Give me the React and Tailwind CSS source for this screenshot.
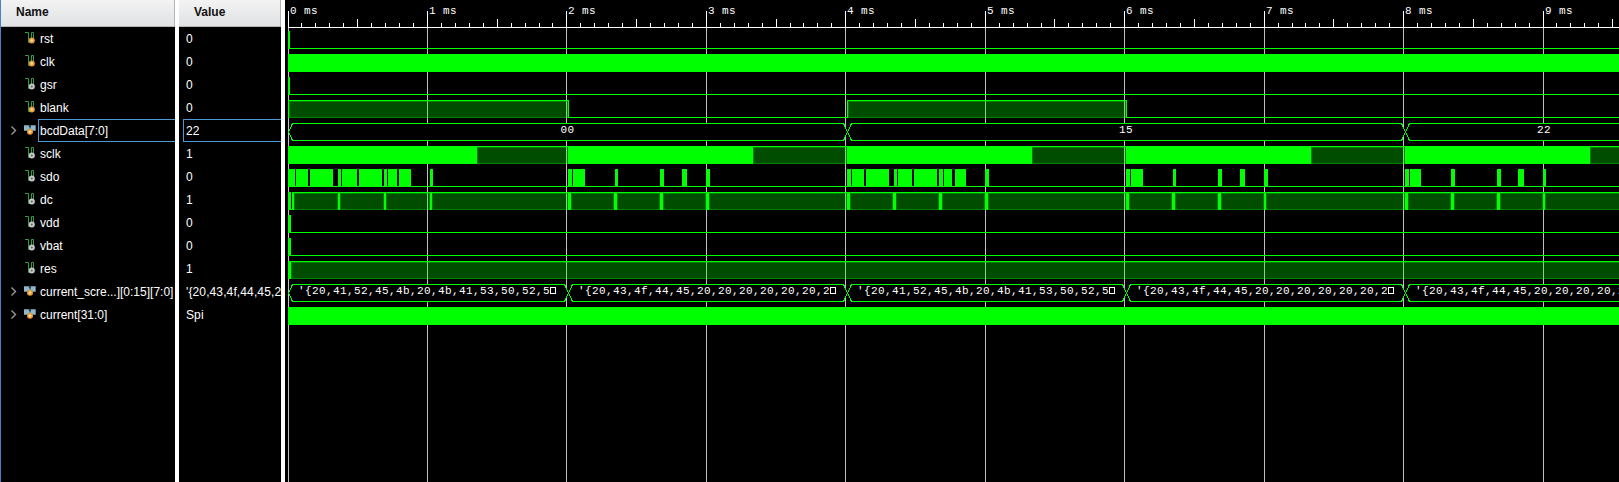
import React from 'react';

const LEFT = 288;
const RIGHT = 1619;
const MS = 139.45;

const signals = [
  { name: 'rst', value: '0', icon: 'in' },
  { name: 'clk', value: '0', icon: 'in' },
  { name: 'gsr', value: '0', icon: 'sig' },
  { name: 'blank', value: '0', icon: 'in' },
  { name: 'bcdData[7:0]', value: '22', icon: 'bus', selected: true },
  { name: 'sclk', value: '1', icon: 'sig' },
  { name: 'sdo', value: '0', icon: 'sig' },
  { name: 'dc', value: '1', icon: 'sig' },
  { name: 'vdd', value: '0', icon: 'sig' },
  { name: 'vbat', value: '0', icon: 'sig' },
  { name: 'res', value: '1', icon: 'sig' },
  { name: 'current_scre...][0:15][7:0]', value: "'{20,43,4f,44,45,20", icon: 'bus' },
  { name: 'current[31:0]', value: 'Spi', icon: 'bus' },
];

function SignalIcon({ type }) {
  if (type === 'bus') {
    return (
      <svg width="14" height="13" viewBox="0 0 14 13" className="block shrink-0">
        <path d="M1 1.300h4.800L7 2.600 8 1.300h4.700v5.500H10.200L7 4.500 3.800 6.800H1z" fill="#8fb8cc" />
        <path d="M5.300 1.300h2.700v2l-1.200 1z" fill="#27424f" />
        <circle cx="7" cy="7.700" r="3" fill="#ee9a35" />
        <path d="M7 6 8.500 7.700 7 9.400 5.500 7.700z" fill="#ffe2b4" />
      </svg>
    );
  }
  const input = type === 'in';
  return (
    <svg width="14" height="13" viewBox="0 0 14 13" className="block shrink-0">
      <path d="M2 0.500h3.500v10h3V0.500h2V7" fill="none" stroke="#2f9a48" strokeWidth="1" />
      <circle cx="8.800" cy="8.500" r="3" fill={input ? '#ee9a35' : '#c8c8c8'} />
      {input ? (
        <path d="M8.800 6.900 10.300 8.500 8.800 10.100 7.300 8.500z" fill="#ffe2b4" />
      ) : (
        <circle cx="8.800" cy="8.500" r="1" fill="#606060" />
      )}
    </svg>
  );
}

function Box({ x1, x2, y, fill = '#00ff00' }) {
  return <rect x={x1} y={y} width={x2 - x1} height="18" fill={fill} />;
}

function HLine({ x1 = LEFT, x2 = RIGHT, y }) {
  return <rect x={x1} y={y} width={x2 - x1} height="1" fill="#00ff00" />;
}

function High({ x1, x2, y }) {
  return (
    <g>
      <rect x={x1} y={y + 1} width={x2 - x1} height="17" fill="#00ff00" fillOpacity="0.3" />
      <rect x={x1 + 0.5} y={y + 1.5} width={x2 - x1 - 1} height="16" fill="none" stroke="#00ff00" strokeOpacity="0.3" />
      <HLine x1={x1} x2={x2} y={y} />
    </g>
  );
}

function Bus({ edges, y }) {
  return edges.slice(0, -1).map((a, i) => {
    const b = edges[i + 1];
    const l = a + 0.5;
    const r = b + 0.5;
    return (
      <path
        key={a}
        d={`M${l} ${y + 9}L${l + 4} ${y + 0.5}H${r - 4}L${r} ${y + 9}L${r - 4} ${y + 17.5}H${l + 4}Z`}
        fill="#000"
        stroke="#00ff00"
        strokeWidth="1"
      />
    );
  });
}

function Label({ x, y, children }) {
  return (
    <text
      x={x}
      y={y}
      fill="#fff"
      fontSize="11"
      letterSpacing="0.4"
      fontFamily='"Liberation Mono", monospace'
      xmlSpace="preserve"
    >
      {children}
    </text>
  );
}

const rowTop = (i) => 31 + 23 * i;

const sdo = [
  [288, 295], [296, 308], [310, 333], [338, 341], [342, 357], [359, 382], [384, 387], [388, 397], [399, 411], [430, 433],
  [568, 572], [573, 585], [615, 618], [660, 664], [682, 687], [706, 710],
  [847, 851], [852, 864], [866, 889], [894, 897], [898, 912], [914, 937], [939, 943], [944, 952], [955, 966], [985, 989],
  [1126, 1130], [1131, 1143], [1173, 1176], [1218, 1222], [1240, 1245], [1264, 1268],
  [1405, 1409], [1410, 1421], [1451, 1455], [1497, 1501], [1518, 1524], [1543, 1546],
];

const dc = [
  [292, 294], [338, 340], [384, 386], [430, 432],
  [568, 571], [614, 617], [660, 663], [706, 709],
  [847, 850], [893, 896], [939, 942], [985, 988],
  [1126, 1129], [1172, 1175], [1218, 1221], [1264, 1266],
  [1405, 1408], [1451, 1454], [1497, 1500], [1543, 1545],
];

const sclk = [[288, 477], [568, 753], [847, 1032], [1126, 1311], [1405, 1590]];

const ARK = "'{20,41,52,45,4b,20,4b,41,53,50,52,5";
const CODE = "'{20,43,4f,44,45,20,20,20,20,20,20,2";
const screens = [[288, ARK], [568, CODE], [847, ARK], [1126, CODE], [1405, CODE]];

function Waveforms() {
  const majors = Array.from({ length: 10 }, (_, i) => Math.floor(LEFT + MS * i));
  const ticks = Array.from({ length: 96 }, (_, i) => i);
  return (
    <svg width="1334" height="482" viewBox="285 0 1334 482" className="block" shapeRendering="crispEdges">
      <rect x="285" y="0" width="1334" height="482" fill="#000" />
      {majors.map((x) => (
        <rect key={x} x={x} y="28" width="1" height="454" fill="#c0c0c0" />
      ))}
      <rect x={LEFT} y="27" width={RIGHT - LEFT} height="1" fill="#fff" />
      {ticks.map((i) => {
        const top = i % 10 === 0 ? 11 : i % 5 === 0 ? 19 : 23;
        return <rect key={i} x={Math.floor(LEFT + (MS * i) / 10)} y={top} width="1" height={27 - top} fill="#fff" />;
      })}
      {majors.map((x, i) => (
        <Label key={x} x={x + 2} y={14}>{`${i} ms`}</Label>
      ))}

      {/* rst, gsr */}
      {[0, 2].map((r) => (
        <g key={r}>
          <Box x1={288} x2={290} y={rowTop(r)} />
          <HLine y={rowTop(r) + 17} />
        </g>
      ))}

      {/* clk, current */}
      <Box x1={LEFT} x2={RIGHT} y={rowTop(1)} />
      <Box x1={LEFT} x2={RIGHT} y={rowTop(12)} />

      {/* blank */}
      <High x1={289} x2={568} y={rowTop(3)} />
      <rect x="288" y={rowTop(3)} width="1" height="18" fill="#00ff00" />
      <Box x1={568} x2={569} y={rowTop(3)} />
      <HLine x1={568} x2={847} y={rowTop(3) + 17} />
      <Box x1={847} x2={848} y={rowTop(3)} />
      <High x1={848} x2={1126} y={rowTop(3)} />
      <Box x1={1126} x2={1127} y={rowTop(3)} />
      <HLine x1={1126} y={rowTop(3) + 17} />

      {/* bcdData */}
      <Bus edges={[288, 847, 1405, 1700]} y={rowTop(4)} />
      <Label x={560.5} y={rowTop(4) + 10}>00</Label>
      <Label x={1119} y={rowTop(4) + 10}>15</Label>
      <Label x={1537} y={rowTop(4) + 10}>22</Label>

      {/* sclk */}
      {sclk.map(([a, b], i) => (
        <g key={a}>
          <Box x1={a} x2={b} y={rowTop(5)} />
          <High x1={b} x2={i < 4 ? sclk[i + 1][0] : 1640} y={rowTop(5)} />
        </g>
      ))}

      {/* sdo */}
      <HLine y={rowTop(6) + 17} />
      {sdo.map(([a, b]) => (
        <Box key={a} x1={a} x2={b} y={rowTop(6)} />
      ))}

      {/* dc */}
      <Box x1={288} x2={291} y={rowTop(7)} />
      <HLine x1={288} x2={294} y={rowTop(7) + 17} />
      {dc.map(([a, b], i) => (
        <g key={a}>
          <Box x1={a} x2={b} y={rowTop(7)} />
          <High x1={b} x2={i < dc.length - 1 ? dc[i + 1][0] : 1640} y={rowTop(7)} />
        </g>
      ))}

      {/* vdd, vbat */}
      {[8, 9].map((r) => (
        <g key={r}>
          <Box x1={288} x2={291} y={rowTop(r)} />
          <HLine y={rowTop(r) + 17} />
        </g>
      ))}

      {/* res */}
      <Box x1={288} x2={291} y={rowTop(10)} />
      <High x1={291} x2={1640} y={rowTop(10)} />

      {/* current_screen */}
      <Bus edges={[288, 568, 847, 1126, 1405, 1684]} y={rowTop(11)} />
      {screens.map(([x, t]) => (
        <g key={x}>
          <Label x={x + 10} y={rowTop(11) + 10}>{t}</Label>
          <rect x={x + 262.5} y={rowTop(11) + 3.5} width="5" height="6" fill="none" stroke="#fff" />
        </g>
      ))}
    </svg>
  );
}

function Header({ children, className }) {
  return (
    <div
      className={`h-[27px] shrink-0 border-r border-b border-[#b4b4b4] bg-linear-to-b from-[#f3f3f3] to-[#e0e2e4] font-bold leading-[25px] text-[#111] ${className}`}
    >
      {children}
    </div>
  );
}

export default function App() {
  return (
    <div className="flex h-[482px] w-[1619px] overflow-hidden bg-white font-['Liberation_Sans',Arial,sans-serif] text-[12px] text-white">
      <div className="flex w-[175px] shrink-0 flex-col overflow-hidden border-l border-[#4a7fd0] bg-black">
        <Header className="pl-[15px]">Name</Header>
        {signals.map((s) => (
          <div key={s.name} className="flex h-[23px] shrink-0 items-center">
            <div className="flex w-[22px] shrink-0 justify-end pr-[6px]">
              {s.icon === 'bus' && (
                <svg width="7" height="11" viewBox="0 0 7 11" className="block">
                  <path d="M1.500 1.500 5.500 5.500 1.500 9.500" fill="none" stroke="#9a9a9a" strokeWidth="1.400" />
                </svg>
              )}
            </div>
            <SignalIcon type={s.icon} />
            <div
              className={`ml-px flex h-[23px] flex-1 items-center overflow-hidden whitespace-nowrap ${
                s.selected ? 'border-y border-l border-[#4a9ad8] pl-px' : 'pl-[2px]'
              }`}
            >
              {s.name}
            </div>
          </div>
        ))}
      </div>
      <div className="ml-1 flex w-[102px] shrink-0 flex-col overflow-hidden bg-black">
        <Header className="pl-[15px]">Value</Header>
        {signals.map((s) => (
          <div
            key={s.name}
            className={`ml-1 flex h-[23px] shrink-0 items-center overflow-hidden whitespace-nowrap tracking-[0.12px] ${
              s.selected ? 'border-y border-l border-[#4a9ad8] pl-[2px]' : 'pl-[3px]'
            }`}
          >
            {s.value}
          </div>
        ))}
      </div>
      <div className="ml-1 w-[1334px] shrink-0">
        <Waveforms />
      </div>
    </div>
  );
}
